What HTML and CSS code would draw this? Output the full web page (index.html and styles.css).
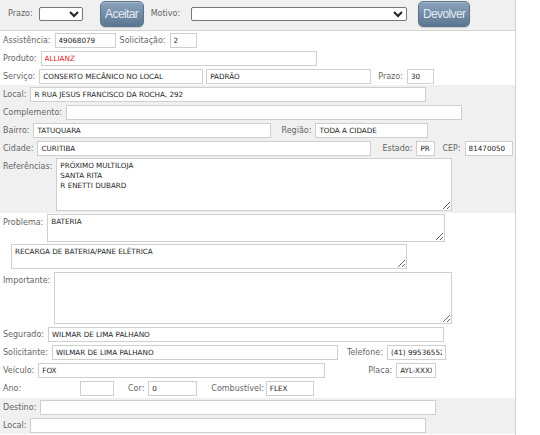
FILE: index.html
```html
<!DOCTYPE html>
<html lang="pt-BR">
<head>
    <meta charset="UTF-8">
    <title>Atendimento</title>
    <link rel="stylesheet" href="styles.css">
</head>
<body>
<div class="page">

    <!-- Barra de ações -->
    <div class="toolbar">
        <label class="lbl prazo-top">Prazo:</label>
        <select class="sel sel-prazo"><option></option></select>
        <button class="btn btn-aceitar">Aceitar</button>
        <label class="lbl motivo">Motivo:</label>
        <select class="sel sel-motivo"><option></option></select>
        <button class="btn btn-devolver">Devolver</button>
    </div>

    <!-- Dados do atendimento -->
    <div class="section">
        <div class="row">
            <label class="lbl">Assistência:</label>
            <input class="inp w-assist" value="49068079">
            <label class="lbl ml-4">Solicitação:</label>
            <input class="inp w-27" value="2">
        </div>
        <div class="row">
            <label class="lbl">Produto:</label>
            <input class="inp w-produto red" value="ALLIANZ">
        </div>
        <div class="row">
            <label class="lbl">Serviço:</label>
            <input class="inp w-servico" value="CONSERTO MECÂNICO NO LOCAL">
            <input class="inp w-tipo ml-3" value="PADRÃO">
            <label class="lbl ml-7">Prazo:</label>
            <input class="inp w-27" value="30">
        </div>
    </div>

    <!-- Endereço -->
    <div class="section alt">
        <div class="row">
            <label class="lbl">Local:</label>
            <input class="inp w-396" value="R RUA JESUS FRANCISCO DA ROCHA, 292">
        </div>
        <div class="row">
            <label class="lbl">Complemento:</label>
            <input class="inp w-396" value="">
        </div>
        <div class="row">
            <label class="lbl">Bairro:</label>
            <input class="inp w-bairro" value="TATUQUARA">
            <label class="lbl ml-10">Região:</label>
            <input class="inp w-regiao" value="TODA A CIDADE">
        </div>
        <div class="row">
            <label class="lbl">Cidade:</label>
            <input class="inp w-cidade" value="CURITIBA">
            <label class="lbl ml-11">Estado:</label>
            <input class="inp w-uf" value="PR">
            <label class="lbl ml-7">CEP:</label>
            <input class="inp w-cep" value="81470050">
        </div>
        <div class="row area-row ref-row">
            <label class="lbl">Referências:</label>
            <textarea class="txt w-396 h-ref">PRÓXIMO MULTILOJA
SANTA RITA
R ENETTI DUBARD</textarea>
        </div>
    </div>

    <!-- Problema e contato -->
    <div class="section">
        <div class="row area-row prob-row">
            <label class="lbl">Problema:</label>
            <textarea class="txt w-398 h-prob">BATERIA</textarea>
        </div>
        <div class="row area-row desc-row">
            <textarea class="txt w-396 h-desc">RECARGA DE BATERIA/PANE ELÉTRICA</textarea>
        </div>
        <div class="row area-row imp-row">
            <label class="lbl">Importante:</label>
            <textarea class="txt w-398 h-imp"></textarea>
        </div>
        <div class="row">
            <label class="lbl">Segurado:</label>
            <input class="inp w-396" value="WILMAR DE LIMA PALHANO">
        </div>
        <div class="row">
            <label class="lbl">Solicitante:</label>
            <input class="inp w-286" value="WILMAR DE LIMA PALHANO">
            <label class="lbl ml-9">Telefone:</label>
            <input class="inp w-fone" value="(41) 995365528">
        </div>
        <div class="row">
            <label class="lbl">Veículo:</label>
            <input class="inp w-287" value="FOX">
            <label class="lbl ml-placa">Placa:</label>
            <input class="inp w-placa" value="AYL-XXXX">
        </div>
        <div class="row last">
            <label class="lbl w-ano-lbl">Ano:</label>
            <input class="inp w-ano" value="">
            <label class="lbl ml-cor">Cor:</label>
            <input class="inp w-49" value="0">
            <label class="lbl ml-comb">Combustível:</label>
            <input class="inp w-48" value="FLEX">
        </div>
    </div>

    <!-- Destino -->
    <div class="section alt bottom">
        <div class="row">
            <label class="lbl">Destino:</label>
            <input class="inp w-396" value="">
        </div>
        <div class="row">
            <label class="lbl">Local:</label>
            <input class="inp w-396" value="">
        </div>
    </div>

</div>
</body>
</html>
```

FILE: styles.css
```css
body {
    margin: 0;
    background: #fff;
    font-family: "DejaVu Sans", Verdana, sans-serif;
    overflow: hidden;
}

/* Área do formulário, com a borda à direita */
.page {
    width: 516px;
    height: 435px;
    box-sizing: border-box;
    border-right: 1px solid #d2d2d2;
}

/* Barra de ações no topo */
.toolbar {
    display: flex;
    align-items: center;
    height: 27px;
    padding-bottom: 3px;
    padding-left: 8px;
    background: #f0f0f0;
    border-bottom: 1px solid #d4d4d4;
}

.sel {
    height: 14px;
    padding: 0 2px;
    font-family: "DejaVu Sans", sans-serif;
    font-size: 7px;
    background: #fff;
    border: 1px solid #767676;
    border-radius: 2px;
    color: #222;
}

.sel-prazo {
    width: 44px;
    margin-left: 2px;
}

.sel-motivo {
    width: 216px;
    margin-left: 7px;
}

.btn {
    height: 26px;
    padding: 0;
    border: 1px solid #5d7690;
    border-radius: 5px;
    background: linear-gradient(#8aa3bb, #5c7792);
    box-shadow: inset 0 1px 0 rgba(255, 255, 255, 0.25), 0 1px 1px rgba(0, 0, 0, 0.15);
    color: #e4ebf2;
    font-family: "Liberation Sans", Arial, sans-serif;
    font-size: 12px;
    letter-spacing: -0.6px;
}

.btn-aceitar {
    width: 44px;
    margin-left: 17px;
}

.btn-devolver {
    width: 52px;
    margin-left: 11px;
}

.motivo {
    margin-left: 7px;
}

/* Blocos de linhas */
.section {
    padding-left: 3px;
    background: #fff;
}

.section.alt {
    background: #f0f0f0;
}

.row {
    display: flex;
    align-items: center;
    height: 18px;
}

.row.last {
    height: 19px;
}

.area-row {
    align-items: flex-start;
    height: auto;
}

.area-row .lbl {
    padding-top: 4px;
}

.ref-row { padding: 1px 0 2px; }
.prob-row { padding: 1px 0 1px; }
.desc-row { padding: 1px 0 1px 8px; }
.imp-row { padding: 2px 0 1px; }

/* Rótulos */
.lbl {
    margin-right: 4px;
    font-size: 8px;
    color: #666;
    white-space: nowrap;
}

/* Campos */
.inp {
    box-sizing: border-box;
    height: 15px;
    padding: 0 3px;
    border: 1px solid #cfcfcf;
    background: #fff;
    font-family: "DejaVu Sans", sans-serif;
    font-size: 7.2px;
    color: #1e1e1e;
    outline: none;
}

.inp.red {
    color: #e0201e;
}

.txt {
    box-sizing: border-box;
    padding: 2px 3px;
    border: 1px solid #cfcfcf;
    background: #fff;
    font-family: "DejaVu Sans", sans-serif;
    font-size: 7.2px;
    line-height: 10px;
    color: #1e1e1e;
    outline: none;
    resize: both;
}

/* Larguras */
.w-27 { width: 27px; }
.w-48 { width: 48px; }
.w-49 { width: 49px; }
.w-286 { width: 286px; }
.w-287 { width: 287px; }
.w-396 { width: 396px; }
.w-398 { width: 398px; }
.w-assist { width: 61px; }
.w-produto { width: 276px; }
.w-servico { width: 164px; }
.w-tipo { width: 165px; }
.w-bairro { width: 238px; }
.w-regiao { width: 113px; }
.w-cidade { width: 334px; }
.w-uf { width: 19px; }
.w-cep { width: 48px; }
.w-fone { width: 59px; }
.w-placa { width: 40px; }
.w-ano { width: 34px; }
.w-ano-lbl { width: 73px; }

/* Alturas das áreas de texto */
.h-ref { height: 53px; }
.h-prob { height: 28px; }
.h-desc { height: 25px; }
.h-imp { height: 52px; }

/* Espaçamentos (rótulos depois de um campo) */
.ml-3 { margin-left: 3px; }
.ml-4 { margin-left: 4px; }
.ml-7 { margin-left: 7px; }
.ml-9 { margin-left: 9px; }
.ml-10 { margin-left: 10px; }
.ml-11 { margin-left: 11px; }
.ml-placa { margin-left: 43px; }
.ml-cor { margin-left: 14px; }
.ml-comb { margin-left: 14px; margin-right: 2px; }
```
